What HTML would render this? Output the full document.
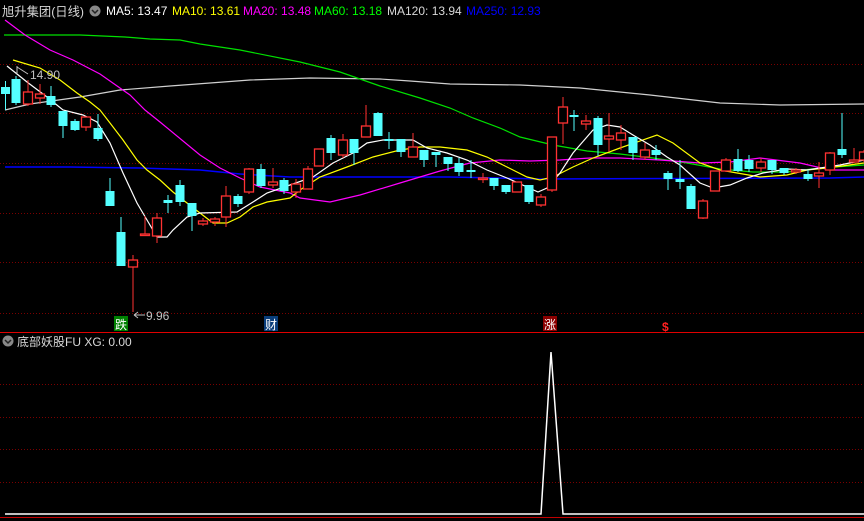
<!DOCTYPE html>
<html><head><meta charset="utf-8"><style>
html,body{margin:0;padding:0;background:#000;width:864px;height:521px;overflow:hidden}
svg{display:block}
text{font-family:"Liberation Sans","Noto Sans CJK SC",sans-serif}
</style></head><body>
<svg id="s" width="864" height="521" viewBox="0 0 864 521" xmlns="http://www.w3.org/2000/svg">
<g stroke="#7a0000" stroke-width="1" stroke-dasharray="1,2">
<line x1="0" y1="64.5" x2="864" y2="64.5"/><line x1="0" y1="113.5" x2="864" y2="113.5"/>
<line x1="0" y1="163.5" x2="864" y2="163.5"/><line x1="0" y1="213.5" x2="864" y2="213.5"/>
<line x1="0" y1="262.5" x2="864" y2="262.5"/><line x1="0" y1="313.5" x2="864" y2="313.5"/>
<line x1="0" y1="384.5" x2="864" y2="384.5"/><line x1="0" y1="417.5" x2="864" y2="417.5"/>
<line x1="0" y1="449.5" x2="864" y2="449.5"/><line x1="0" y1="482.5" x2="864" y2="482.5"/>
</g>
<line x1="0" y1="332.5" x2="864" y2="332.5" stroke="#e00000"/>
<line x1="0" y1="517.5" x2="864" y2="517.5" stroke="#c00000"/>
<g fill="none" stroke-width="1.2">
<polyline stroke="#d0d0d0" points="5,110 30,104 80,97 120,90 170,86 250,80 310,78 380,79 410,81 450,84 520,85 580,88 650,95 720,103 780,105 864,104"/>
<polyline stroke="#00e000" points="4,35 80,35 125,37 150,39 180,40 200,44 240,50 300,62 340,72 380,86 420,98 450,108 473,118 500,128 520,137 553,145 587,151 620,154 653,158 687,163 720,169 753,172 787,172 820,168 864,165"/>
<polyline stroke="#0000ff" stroke-width="1.5" points="5,167 70,167 140,168 200,170 240,174 290,177 450,177 540,179 830,178 864,177"/>
<polyline stroke="#ff00ff" points="5,20 25,35 50,50 73,60 100,74 130,95 145,110 160,122 200,155 220,168 240,178 260,187 290,193 300,198 330,202 360,195 400,183 440,171 470,163 500,160 530,161 560,160 590,158 620,158 660,160 700,163 730,162 760,158 800,163 830,170 864,170"/>
<polyline stroke="#ffff00" points="13,60 40,68 60,80 77,93 90,102 100,110 110,123 123,140 137,160 147,170 160,180 173,192 187,203 200,213 213,223 227,223 240,217 253,207 267,202 290,198 300,190 320,177 347,167 373,157 400,150 420,147 440,147 467,150 487,157 507,167 527,177 540,180 553,177 573,167 593,158 620,148 657,135 673,143 700,163 720,170 760,177 787,175 807,170 827,168 864,163"/>
<polyline stroke="#ffffff" points="7,66 27,82 47,97 63,110 83,115 97,122 110,143 123,173 137,203 147,220 157,237 167,237 173,230 187,217 200,213 237,212 253,202 267,193 290,185 313,177 333,163 353,153 367,143 383,140 413,140 427,148 447,153 467,160 487,170 507,178 527,187 538,192 547,188 560,173 573,153 593,130 607,125 620,127 633,135 650,145 667,157 680,165 700,183 713,188 730,185 747,178 763,173 787,169 807,170 840,165 864,160"/>
</g>
<g id="c"></g>
<polyline fill="none" stroke="#fff" stroke-width="1.5" points="5,514 541,514 551,352 563,514 864,514"/>
<text x="2" y="16" font-size="12.3" fill="#d8d8d8">旭升集团(日线)</text>
<circle cx="95" cy="11" r="5.5" fill="#888"/><path d="M92,10 L95,13 L98,10" stroke="#222" stroke-width="1.5" fill="none"/>
<g font-size="12">
<text x="106" y="15" fill="#fff">MA5: 13.47</text>
<text x="172" y="15" fill="#ffff00">MA10: 13.61</text>
<text x="243" y="15" fill="#ff00ff">MA20: 13.48</text>
<text x="314" y="15" fill="#00ff00">MA60: 13.18</text>
<text x="387" y="15" fill="#d8d8d8">MA120: 13.94</text>
<text x="466" y="15" fill="#0000ff">MA250: 12.93</text>
<text x="30" y="79" fill="#c0c0c0">14.90</text>
<text x="146" y="320" fill="#c0c0c0">9.96</text>
</g>
<path d="M17,66 L17,74 M17,67 L28,74" stroke="#c0c0c0" fill="none"/>
<path d="M134,315 L145,315 M134,315 L138,312 M134,315 L138,318" stroke="#c0c0c0" fill="none"/>
<rect x="114" y="316" width="14" height="15" fill="#008000"/><text x="115" y="329" font-size="12" fill="#fff">跌</text>
<rect x="264" y="316" width="14" height="15" fill="#0a3d7a"/><text x="265" y="329" font-size="12" fill="#fff">财</text>
<rect x="543" y="316" width="14" height="15" fill="#8b0000"/><text x="544" y="329" font-size="12" fill="#fff">涨</text>
<text x="662" y="331" font-size="12" font-weight="bold" fill="#ff2020">$</text>
<circle cx="8" cy="341" r="5.5" fill="#888"/><path d="M5,340 L8,343 L11,340" stroke="#222" stroke-width="1.5" fill="none"/>
<text x="17" y="346" font-size="12" fill="#d8d8d8">底部妖股FU XG: 0.00</text>
</svg>
<script>
var d=[[5.5,0,81,87,94,110],[16,0,76,79,103,105],[28,1,80,92,104,106],[40,1,84,94,98,104],[51,0,86,96,105,107],[63,0,111,111,126,138],[75,0,119,121,130,131],[86,1,117,117,127,131],[98,0,114,128,139,141],[110,0,178,191,206,206],[121,0,217,232,266,266],[133,1,255,260,267,312],[145,1,216,234,235,235],[157,1,213,218,236,243],[168,0,195,200,203,213],[180,0,180,185,202,206],[192,0,203,203,216,231],[203,1,218,221,224,226],[215,1,217,219,222,226],[226,1,186,196,217,227],[238,0,194,196,204,207],[249,1,168,169,192,194],[261,0,164,169,186,188],[273,1,168,182,185,188],[284,0,178,180,191,194],[296,1,179,184,192,198],[308,1,166,169,189,189],[319,1,149,149,166,166],[331,0,135,138,153,160],[343,1,134,140,155,158],[354,0,139,139,153,165],[366,1,105,126,137,137],[378,0,112,113,136,136],[389,0,132,139,141,149],[401,0,139,139,152,157],[413,1,133,147,157,157],[424,0,150,150,160,167],[436,0,152,152,155,167],[448,0,157,157,164,171],[459,0,158,163,172,176],[471,0,160,170,172,178],[483,1,173,178,179,183],[494,0,178,178,186,190],[506,0,185,185,192,194],[517,1,182,182,192,192],[529,0,185,185,202,204],[541,1,194,197,205,207],[552,1,137,137,190,192],[563,1,97,107,123,144],[574,0,110,115,117,131],[586,1,115,121,124,130],[598,0,116,118,145,156],[609,1,113,136,139,152],[621,1,125,133,140,150],[633,0,137,137,153,160],[645,1,143,150,157,160],[656,0,145,150,155,160],[668,0,171,173,179,190],[680,0,160,179,182,189],[691,0,184,186,209,209],[703,1,199,201,218,219],[715,1,171,171,191,191],[726,1,158,160,171,172],[738,0,149,159,171,172],[749,0,155,160,169,172],[761,1,158,162,168,172],[772,0,160,160,170,174],[784,0,168,168,173,175],[796,1,168,170,172,174],[808,0,170,174,179,181],[819,1,162,173,176,188],[830,1,152,153,170,175],[842,0,113,149,155,158],[854,1,148,160,162,163],[864,1,150,152,160,162]];
var g=document.getElementById('c'),h='';
d.forEach(function(c){var x=c[0],col=c[1]?'#ff3232':'#54ffff';
h+='<line x1="'+x+'" y1="'+c[2]+'" x2="'+x+'" y2="'+c[5]+'" stroke="'+col+'"/>';
var bh=Math.max(c[4]-c[3],1.5);
if(c[1])h+='<rect x="'+(x-4.5)+'" y="'+c[3]+'" width="9" height="'+bh+'" fill="#000" stroke="'+col+'" stroke-width="1.3"/>';
else h+='<rect x="'+(x-4.5)+'" y="'+c[3]+'" width="9" height="'+bh+'" fill="'+col+'"/>';});
g.innerHTML=h;
</script>
</body></html>
